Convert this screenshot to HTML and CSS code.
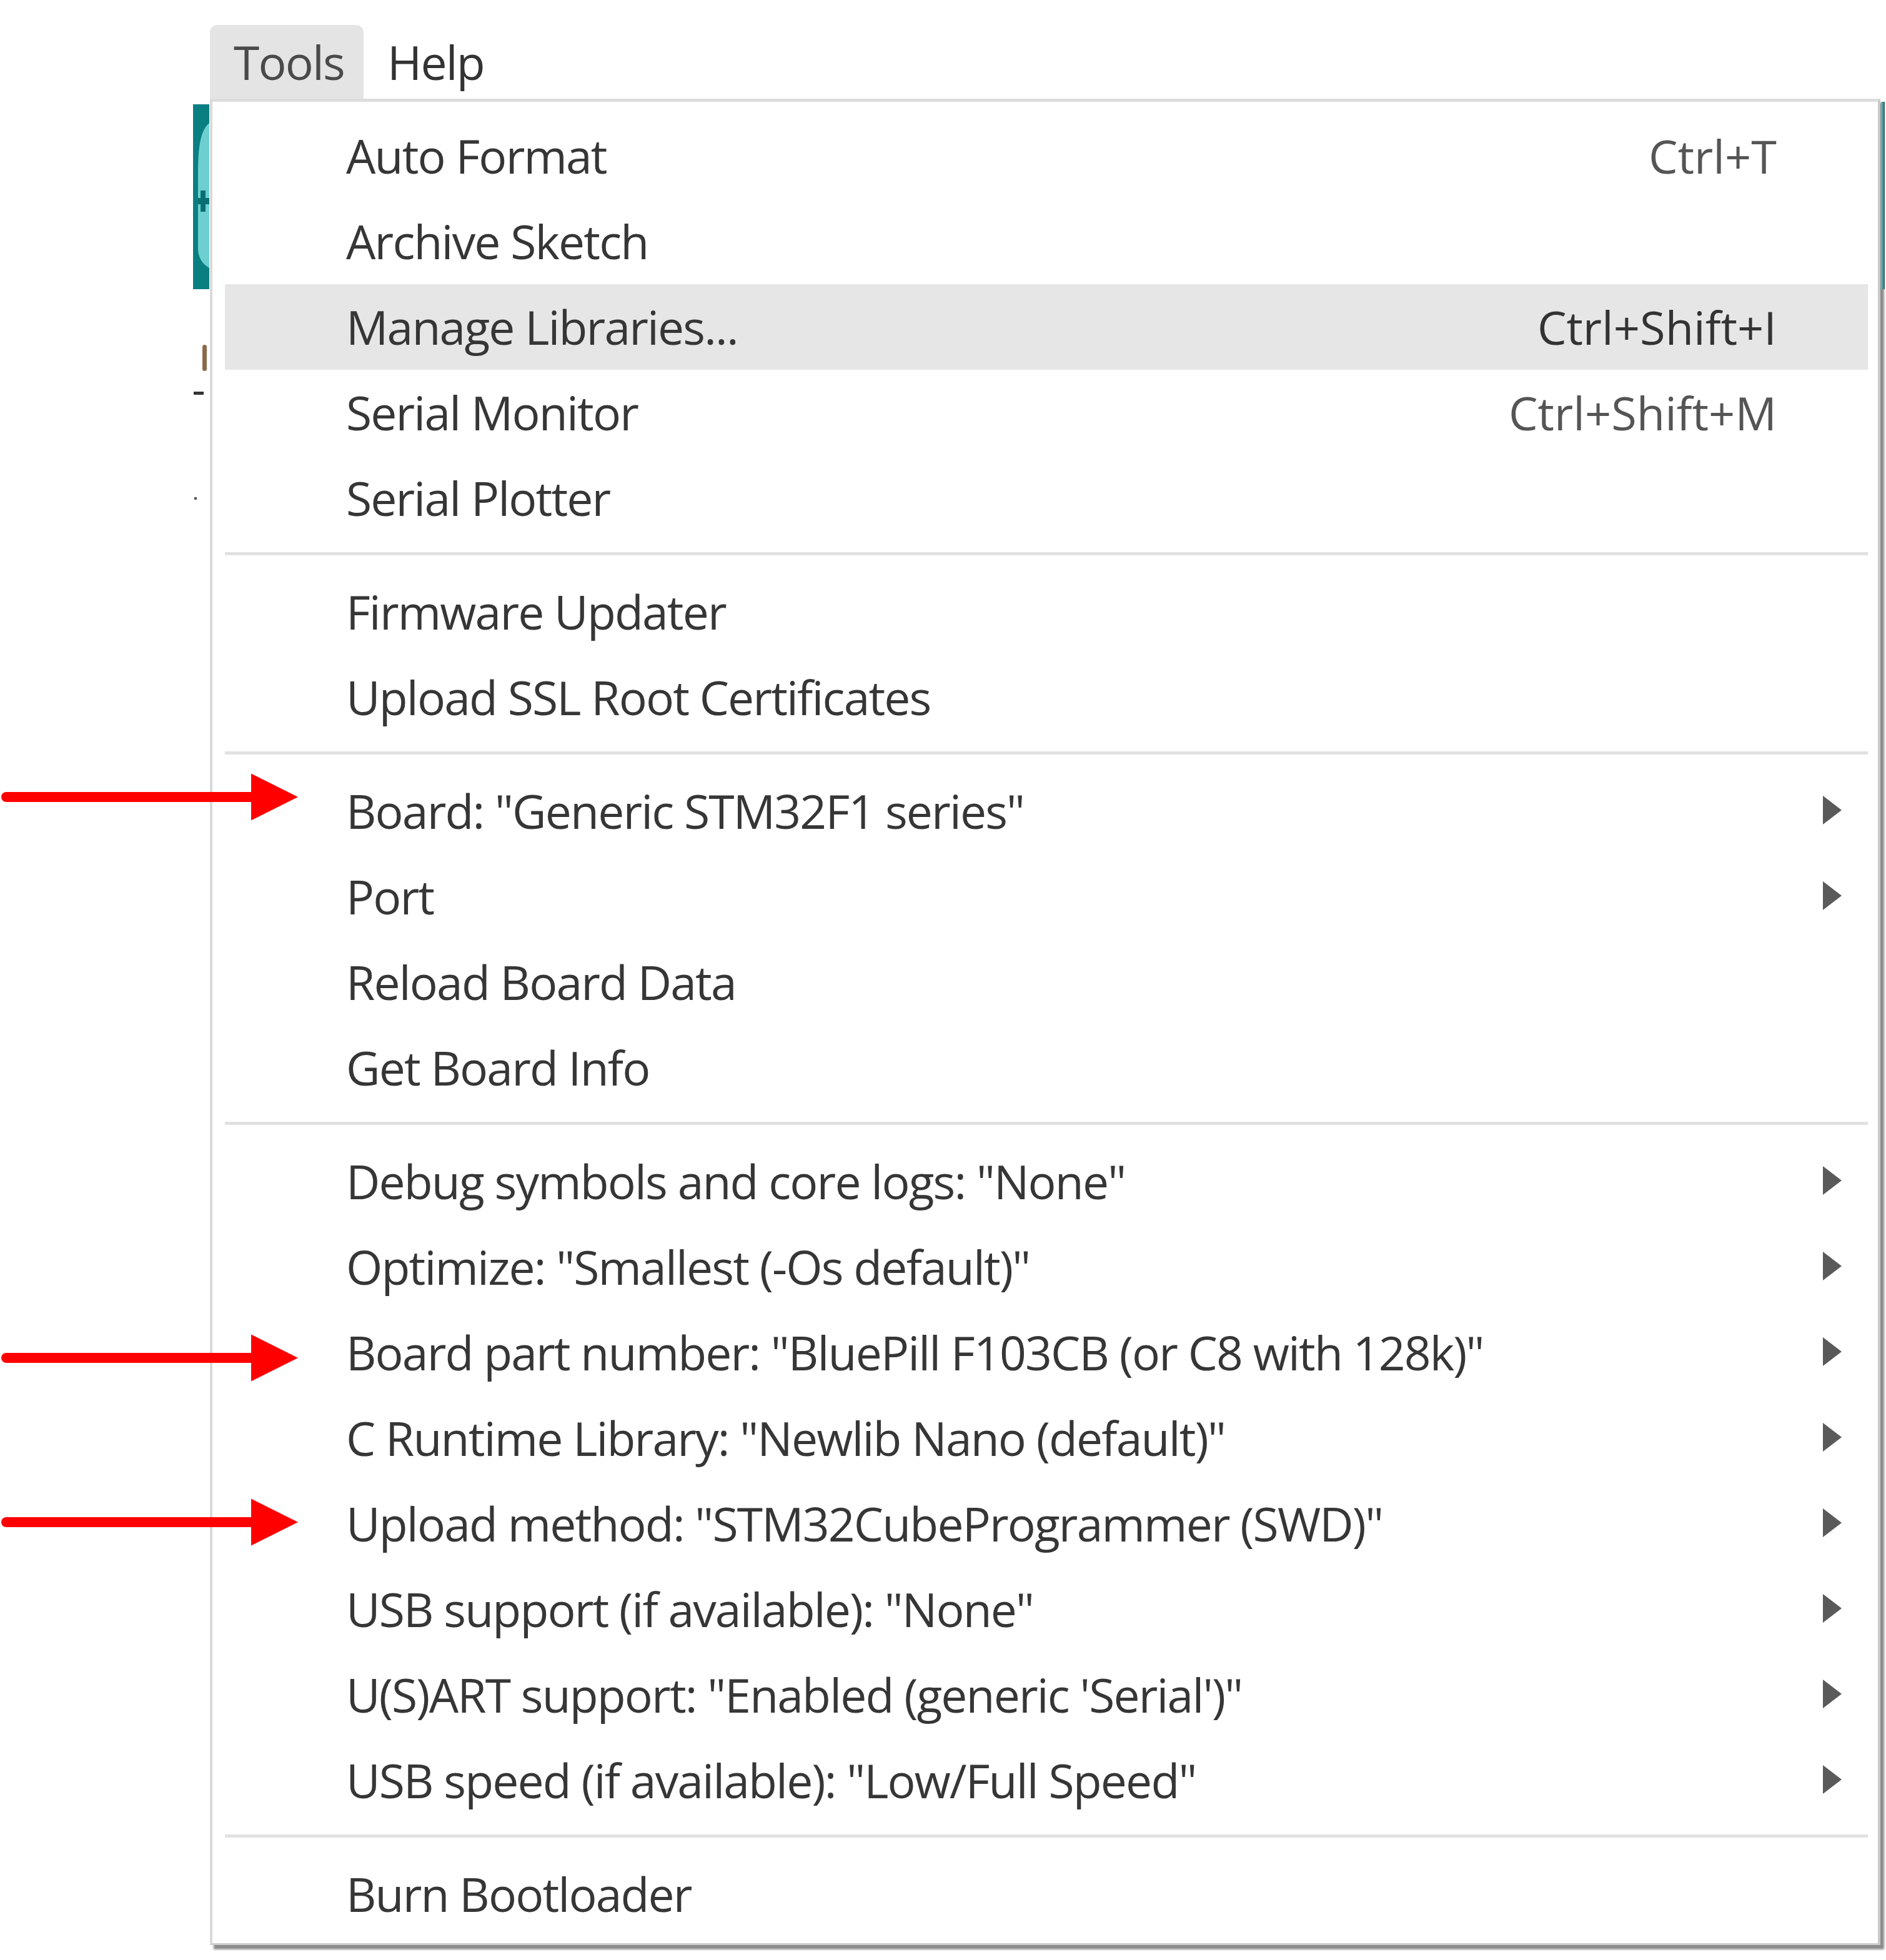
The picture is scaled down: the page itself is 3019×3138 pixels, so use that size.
FILE: index.html
```html
<!DOCTYPE html>
<html lang="en">
<head>
<meta charset="utf-8">
<title>Tools menu</title>
<link rel="stylesheet" href="styles.css">
</head>
<body>
<div class="stage">
  <div class="menubar">
    <div class="tab tab-active">Tools</div>
    <div class="tab">Help</div>
  </div>

  <div class="menu">
    <div class="item"><span class="label">Auto Format</span><span class="key">Ctrl+T</span><span class="sub"></span></div>
    <div class="item"><span class="label">Archive Sketch</span><span class="key"></span><span class="sub"></span></div>
    <div class="item hover"><span class="label">Manage Libraries...</span><span class="key strong">Ctrl+Shift+I</span><span class="sub"></span></div>
    <div class="item"><span class="label">Serial Monitor</span><span class="key">Ctrl+Shift+M</span><span class="sub"></span></div>
    <div class="item"><span class="label">Serial Plotter</span><span class="key"></span><span class="sub"></span></div>
    <div class="sep"></div>
    <div class="item"><span class="label">Firmware Updater</span><span class="key"></span><span class="sub"></span></div>
    <div class="item"><span class="label">Upload SSL Root Certificates</span><span class="key"></span><span class="sub"></span></div>
    <div class="sep"></div>
    <div class="item"><span class="label">Board: "Generic STM32F1 series"</span><span class="key"></span><span class="sub arrow"></span></div>
    <div class="item"><span class="label">Port</span><span class="key"></span><span class="sub arrow"></span></div>
    <div class="item"><span class="label">Reload Board Data</span><span class="key"></span><span class="sub"></span></div>
    <div class="item"><span class="label">Get Board Info</span><span class="key"></span><span class="sub"></span></div>
    <div class="sep"></div>
    <div class="item"><span class="label">Debug symbols and core logs: "None"</span><span class="key"></span><span class="sub arrow"></span></div>
    <div class="item"><span class="label">Optimize: "Smallest (-Os default)"</span><span class="key"></span><span class="sub arrow"></span></div>
    <div class="item"><span class="label">Board part number: "BluePill F103CB (or C8 with 128k)"</span><span class="key"></span><span class="sub arrow"></span></div>
    <div class="item"><span class="label">C Runtime Library: "Newlib Nano (default)"</span><span class="key"></span><span class="sub arrow"></span></div>
    <div class="item"><span class="label">Upload method: "STM32CubeProgrammer (SWD)"</span><span class="key"></span><span class="sub arrow"></span></div>
    <div class="item"><span class="label">USB support (if available): "None"</span><span class="key"></span><span class="sub arrow"></span></div>
    <div class="item"><span class="label">U(S)ART support: "Enabled (generic 'Serial')"</span><span class="key"></span><span class="sub arrow"></span></div>
    <div class="item"><span class="label">USB speed (if available): "Low/Full Speed"</span><span class="key"></span><span class="sub arrow"></span></div>
    <div class="sep"></div>
    <div class="item"><span class="label">Burn Bootloader</span><span class="key"></span><span class="sub"></span></div>
  </div>

  <!-- pieces of the window behind the menu -->
  <svg class="behind-logo" width="26" height="296" viewBox="0 0 26 296">
    <rect x="0" y="0" width="26" height="296" fill="#0a7f82"/>
    <path d="M26 30 C 14 40, 8 60, 8 110 L 8 230 C 8 245, 14 255, 26 262 Z" fill="#6dcfd0"/>
    <path d="M8 150 L 26 150 L 26 160 L 8 160 Z M12 138 L 20 138 L 20 172 L 12 172 Z" fill="#0a6f73"/>
  </svg>
  <div class="behind-mark mark-a"></div>
  <div class="behind-mark mark-b"></div>
  <div class="behind-mark mark-c"></div>
  <div class="behind-edge"></div>

  <!-- annotation arrows -->
  <svg class="annot a1" width="480" height="80" viewBox="0 0 480 80"><line x1="10" y1="40" x2="405" y2="40" stroke="#ff0000" stroke-width="16" stroke-linecap="round"/><polygon points="402,2.5 477,40 402,77.5" fill="#ff0000"/></svg>
  <svg class="annot a2" width="480" height="80" viewBox="0 0 480 80"><line x1="10" y1="40" x2="405" y2="40" stroke="#ff0000" stroke-width="16" stroke-linecap="round"/><polygon points="402,2.5 477,40 402,77.5" fill="#ff0000"/></svg>
  <svg class="annot a3" width="480" height="80" viewBox="0 0 480 80"><line x1="10" y1="40" x2="405" y2="40" stroke="#ff0000" stroke-width="16" stroke-linecap="round"/><polygon points="402,2.5 477,40 402,77.5" fill="#ff0000"/></svg>
</div>
</body>
</html>
```

FILE: styles.css
```css
html, body {
  margin: 0;
  padding: 0;
  background: #ffffff;
}

.stage {
  position: relative;
  width: 3019px;
  height: 3138px;
  overflow: hidden;
  font-family: "Open Sans", "Noto Sans", sans-serif;
  font-size: 75px;
  letter-spacing: -1.85px;
  color: #363636;
  padding: 40px 0 0 336px;
  box-sizing: border-box;
}

.menubar {
  display: flex;
  height: 118px;
  align-items: stretch;
}

.tab {
  display: flex;
  align-items: center;
  padding: 0 38px;
  line-height: 1;
  color: #333333;
}

.tab-active {
  width: 246px;
  box-sizing: border-box;
  background: #e4e4e4;
  border-radius: 12px 12px 0 0;
  color: #4a4a4a;
}

.menu {
  width: 2674px;
  box-sizing: border-box;
  background: #ffffff;
  border-top: 5px solid #dddddd;
  border-left: 4px solid #d9d9d9;
  border-right: 4px solid #c9c9c9;
  border-bottom: 3px solid #cfcfcf;
  padding: 18px 0 10px 0;
  box-shadow: 6px 7px 3px rgba(0, 0, 0, 0.45);
  position: relative;
  z-index: 1;
}

.item {
  display: flex;
  align-items: center;
  height: 137px;
  margin: 0 16px 0 20px;
  padding: 0 42px 0 194px;
  line-height: 1;
  white-space: nowrap;
}

.item.hover {
  background: #e6e6e7;
}

.label {
  flex: 1;
}

.key {
  margin-right: 74px;
  font-size: 74px;
  letter-spacing: 0;
  color: #555555;
}

.key.strong {
  color: #333333;
}

.sub {
  width: 30px;
  height: 47px;
  flex: none;
}

.sub.arrow {
  width: 0;
  height: 0;
  border-left: 30px solid #5a5a5a;
  border-top: 23px solid transparent;
  border-bottom: 23px solid transparent;
  margin-top: -4px;
}

.sep {
  height: 5px;
  margin: 18px 16px 22px 20px;
  background: #e1e1e1;
}

.behind-logo {
  position: absolute;
  left: 309px;
  top: 167px;
}

.behind-mark {
  position: absolute;
}

.mark-a {
  left: 324px;
  top: 552px;
  width: 7px;
  height: 42px;
  border-radius: 4px;
  background: #8a6a4a;
}

.mark-b {
  left: 310px;
  top: 627px;
  width: 16px;
  height: 5px;
  background: #333333;
}

.mark-c {
  left: 311px;
  top: 796px;
  width: 4px;
  height: 4px;
  background: #555555;
}

.behind-edge {
  position: absolute;
  left: 3011px;
  top: 163px;
  width: 6px;
  height: 300px;
  background: linear-gradient(to right, #5fc6c9, #2f5f62);
  z-index: 2;
}

.annot {
  position: absolute;
  left: 0;
  z-index: 3;
}

.a1 { top: 1236px; }
.a2 { top: 2134px; }
.a3 { top: 2397px; }
```
